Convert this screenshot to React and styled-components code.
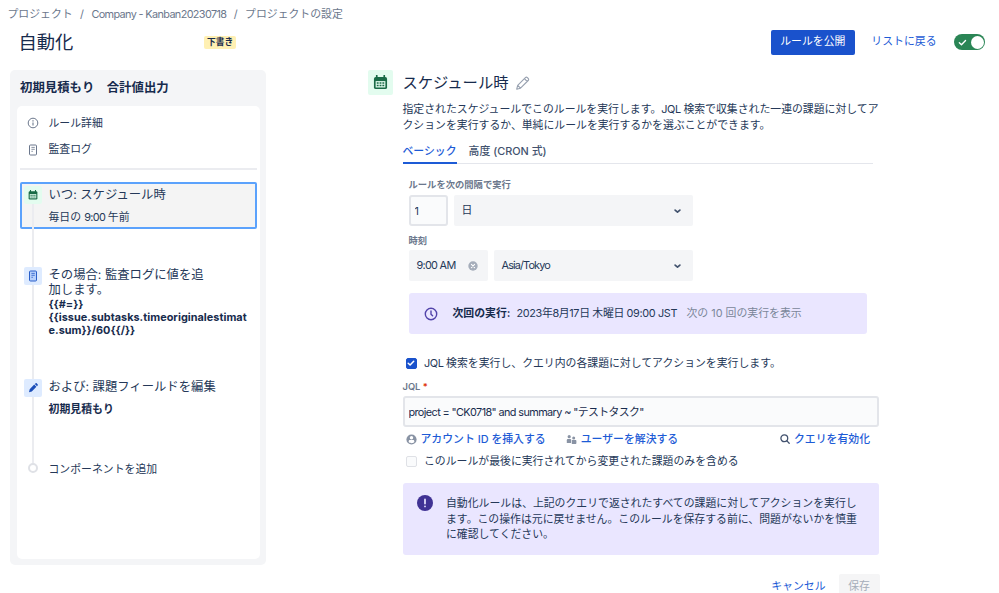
import React from 'react';
import styled, { createGlobalStyle, css } from 'styled-components';

const GlobalStyle = createGlobalStyle`
  * {
    box-sizing: border-box;
  }
  body {
    margin: 0;
    background: #fff;
    color: #253858;
    font-family: Inter, "Noto Sans CJK JP", sans-serif;
    font-size: 10.87px;
    line-height: 15.5px;
    overflow: hidden;
  }
  p, h1, h2, h3, ul {
    margin: 0;
    padding: 0;
    font-weight: 400;
  }
  button, input {
    font: inherit;
    color: inherit;
    letter-spacing: inherit;
  }
  svg {
    display: block;
    flex: none;
  }
`;

const Page = styled.div`
  width: 999px;
  height: 593px;
  overflow: hidden;
`;

const Breadcrumbs = styled.nav`
  display: flex;
  gap: 7.4px;
  height: 22px;
  padding: 7px 0 0 7.5px;
  color: #6b778c;
  white-space: nowrap;
`;

const Latin = styled.span`
  letter-spacing: ${props => props.$spacing || '-0.4px'};
`;

const Header = styled.header`
  display: flex;
  align-items: center;
  height: 40px;
  padding: 0 14px 0 18.5px;
`;

const PageTitle = styled.h1`
  width: 185.5px;
  font-size: 18.3px;
  line-height: 26px;
  color: #172b4d;
`;

const DraftBadge = styled.span`
  height: 13px;
  padding: 0 3px;
  border-radius: 2px;
  background: #fff0b3;
  color: #172b4d;
  font-size: 8.7px;
  font-weight: 700;
  line-height: 13px;
`;

const HeaderActions = styled.div`
  display: flex;
  align-items: center;
  margin-left: auto;
`;

const PublishButton = styled.button`
  width: 84px;
  height: 25px;
  margin-right: 16.5px;
  padding: 0;
  border: 0;
  border-radius: 2px;
  background: #1a52cc;
  color: #fff;
`;

const TextLink = styled.a`
  color: #1d5bd6;
  white-space: nowrap;
`;

const Toggle = styled.span`
  display: flex;
  align-items: center;
  justify-content: space-between;
  width: 31px;
  height: 16px;
  margin-left: 17.5px;
  padding: 0 1px 0 4px;
  border-radius: 8px;
  background: #2a8555;

  &::after {
    content: "";
    width: 13px;
    height: 13px;
    border-radius: 50%;
    background: #fff;
  }
`;

const Columns = styled.div`
  display: flex;
  align-items: flex-start;
  padding: 8px 0 0 10px;
`;

const Sidebar = styled.aside`
  width: 256px;
  height: 495px;
  padding: 8px 6px 6px 7px;
  border-radius: 5px;
  background: #f4f5f7;
`;

const RuleName = styled.h3`
  height: 28px;
  padding-left: 3px;
  color: #172b4d;
  font-size: 12.4px;
  font-weight: 700;
  line-height: 19px;
`;

// own stacking context, so the selection outline stays above the card
const RuleCard = styled.div`
  position: relative;
  z-index: 0;
  height: 453px;
  padding: 4px 3px 0;
  border-radius: 5px;
  background: #fff;
`;

const MenuItem = styled.div`
  display: flex;
  align-items: center;
  gap: 9.5px;
  height: 26.5px;
  padding-left: 7px;
`;

const Divider = styled.div`
  height: 2px;
  margin: 5px 0 12px;
  background: #ebecf0;
`;

const Steps = styled.ul`
  list-style: none;
`;

const Step = styled.li`
  display: flex;
  height: ${props => props.$height}px;
`;

const Rail = styled.div`
  display: flex;
  flex-direction: column;
  align-items: center;
  flex: none;
  width: 26px;

  &::after {
    content: "";
    flex: 1;
    width: 2px;
    background: ${props => (props.$last ? 'transparent' : '#ebecf0')};
  }
`;

const StepTile = styled.span`
  display: flex;
  align-items: center;
  justify-content: center;
  width: 18px;
  height: 18px;
  border-radius: 2px;
  background: ${props => props.$color};
`;

const StepText = styled.div`
  padding-left: 2.5px;
  width: 205px;
`;

// the outline covers only the text, the rail runs on below it
const SelectedStep = styled(Step)`
  position: relative;

  &::before {
    content: "";
    position: absolute;
    inset: 0 0 38px;
    border: 2px solid #5ba2fc;
    border-radius: 2px;
    background: #f4f4f4;
    z-index: -1;
  }

  ${Rail} {
    padding-top: 4px;
  }
  ${StepText} {
    padding-top: 5px;
  }
`;

const StepTitle = styled.p`
  font-size: 12.35px;
  line-height: 15.5px;
`;

const StepDetail = styled.p`
  margin-top: ${props => props.$gap || 0}px;
  line-height: 13px;
  white-space: nowrap;
  ${props => props.$strong && css`
    color: #172b4d;
    font-weight: 700;
    letter-spacing: 0.03px;
  `}
`;

const Ring = styled.span`
  width: 10px;
  height: 10px;
  border: 2px solid #dfe1e6;
  border-radius: 50%;
`;

const Main = styled.main`
  width: 512px;
  margin-left: 101.5px;
`;

const RuleHeading = styled.div`
  display: flex;
  align-items: center;
  height: 25px;
`;

const HeadingTile = styled(StepTile)`
  width: 25px;
  height: 25px;
  margin-right: 10px;
`;

const HeadingText = styled.h2`
  margin-right: 5px;
  color: #172b4d;
  font-size: 15.3px;
`;

const Body = styled.div`
  padding-left: 35px;
`;

const Description = styled.p`
  padding-top: 7px;
  white-space: nowrap;
`;

const Tabs = styled.div`
  display: flex;
  gap: 12px;
  width: 470px;
  height: 26px;
  margin-top: 5px;
  border-bottom: 1px solid #e4e6ec;
  font-weight: 500;
`;

const Tab = styled.span`
  height: 26px;
  padding-top: 6px;
  color: ${props => (props.$active ? '#1d5bd6' : '#42526e')};
  border-bottom: ${props => (props.$active ? '2px solid #1d5bd6' : '0')};
`;

const Fields = styled.div`
  padding: 13px 0 0 6px;
`;

const Label = styled.label`
  display: block;
  height: ${props => props.$height || 18}px;
  color: #6b778c;
  font-size: 9.3px;
  font-weight: 600;
  line-height: 15px;
`;

const FieldRow = styled.div`
  display: flex;
  gap: 6px;
  height: 31px;
  margin-bottom: 7px;
`;

const Control = styled.div`
  display: flex;
  align-items: center;
  justify-content: space-between;
  width: ${props => props.$width}px;
  padding: 0 10px 0 8px;
  border-radius: 2px;
  background: #f4f5f7;
  color: #253858;
  letter-spacing: ${props => props.$spacing || '-0.7px'};
`;

const NumberInput = styled.input`
  width: 39px;
  height: 31px;
  padding: 0 4px;
  border: 2px solid #e3e5ea;
  border-radius: 3px;
  background: #fafbfc;
  color: #253858;
`;

const NextRun = styled.div`
  display: flex;
  align-items: center;
  width: 458px;
  height: 41px;
  margin-top: 12px;
  padding-left: 15px;
  border-radius: 3px;
  background: #eae6ff;
  white-space: nowrap;

  strong {
    width: 64px;
    margin-left: 15px;
    color: #172b4d;
    font-weight: 700;
  }
`;

const NextRunDate = styled.span`
  width: 170px;
  letter-spacing: -0.35px;
`;

const Muted = styled.span`
  padding-top: 1px;
  color: #7a869a;
`;

const CheckRow = styled.label`
  display: flex;
  align-items: center;
  gap: 7.5px;
  height: 16px;
  margin: ${props => props.$margin || 0};
  padding-left: 3px;
  white-space: nowrap;
`;

const CheckText = styled.span`
  padding-top: 1px;
`;

const Box = styled.span`
  display: flex;
  align-items: center;
  justify-content: center;
  width: 11px;
  height: 11px;
  border: 1px solid ${props => (props.$checked ? '#1a52cc' : '#dfe1e6')};
  border-radius: 2px;
  background: ${props => (props.$checked ? '#1a52cc' : '#fafbfc')};
`;

const Required = styled.span`
  color: #de350b;
`;

const QueryInput = styled.input`
  display: block;
  width: 476.5px;
  height: 31px;
  padding: 0 4px 2px;
  border: 2px solid #e3e5ea;
  border-radius: 3px;
  background: #fafbfc;
  color: #172b4d;
  letter-spacing: -0.6px;
`;

const QueryLinks = styled.div`
  display: flex;
  align-items: center;
  height: 16px;
  margin: 4px 0 6px;
  padding: 0 9.5px 0 3px;

  svg {
    margin-right: 4px;
  }
  ${TextLink} {
    padding-top: 2px;
    font-weight: 500;
  }
`;

const ResolveGroup = styled.span`
  display: flex;
  align-items: center;
  margin: 0 auto 0 20px;
`;

const Warning = styled.div`
  display: flex;
  gap: 13.5px;
  width: 476.5px;
  height: 72px;
  margin-top: 14px;
  padding: 12px 14px;
  border-radius: 3px;
  background: #eae6ff;
  white-space: nowrap;

  p {
    padding-top: 1px;
  }
`;

const Actions = styled.div`
  display: flex;
  justify-content: flex-end;
  align-items: center;
  gap: 13px;
  height: 25px;
  width: 477px;
  margin-top: 19px;
`;

const SaveButton = styled.button`
  width: 41px;
  height: 25px;
  padding: 0;
  border: 0;
  border-radius: 2px;
  background: #f5f5f6;
  color: #a5adba;
`;

const CalendarIcon = ({ size, color = '#1a6b47' }) => (
  <svg width={size} height={size} viewBox="0 0 16 16" fill="none">
    <path d="M3 2h10a2 2 0 0 1 2 2v9a2 2 0 0 1-2 2H3a2 2 0 0 1-2-2V4a2 2 0 0 1 2-2z" fill={color} />
    <path d="M2.8 6.5h10.4v6.8H2.8z" fill="#e3fcef" />
    <path d="M4 .6v3M12 .6v3" stroke={color} strokeWidth="1.8" strokeLinecap="round" />
    <path d="M4 8.5h2M7 8.5h2M10 8.5h2M4 11.2h2M7 11.2h2M10 11.2h2" stroke={color} strokeWidth="1.6" />
  </svg>
);

const InfoIcon = () => (
  <svg width="12" height="12" viewBox="0 0 12 12" fill="none" stroke="#6b778c">
    <circle cx="6" cy="6" r="4.8" />
    <path d="M6 5.5v2.9" strokeWidth="1.1" />
    <path d="M6 3.3v1.1" strokeWidth="1.2" />
  </svg>
);

const LogIcon = ({ color, fill = 'none' }) => (
  <svg width="12" height="12" viewBox="0 0 12 12" fill="none" stroke={color}>
    <rect x="2.5" y="1" width="7" height="10" rx="1" fill={fill} />
    <path d="M4.4 3.4h3.4M4.4 5.3h3.4M4.4 7.3h1.5" strokeWidth="0.8" />
  </svg>
);

const EditIcon = () => (
  <svg width="12" height="12" viewBox="0 0 12 12" fill="#1a4db8">
    <path d="M7.2 2.6l2.2 2.2-4.6 4.7-2.8.8.7-3zM7.8 2l.7-.6c.4-.4.9-.4 1.3 0l.8.9c.4.4.4.9 0 1.3l-.6.6z" />
  </svg>
);

const PencilIcon = () => (
  <svg width="18" height="18" viewBox="0 0 18 18" fill="none" stroke="#97a0af" strokeWidth="1.1" strokeLinejoin="round">
    <path d="M3.7 11.4l7.7-7.7c.6-.6 1.4-.6 2 0l.8.8c.6.6.6 1.4 0 2l-7.7 7.7-3.8 1zM10.4 4.7l2.8 2.8M3.7 11.4l2.8 2.8" />
  </svg>
);

const Chevron = () => (
  <svg width="11" height="10" viewBox="0 0 11 10" fill="none" stroke="#42526e" strokeWidth="1.7" strokeLinecap="round" strokeLinejoin="round">
    <path d="M3.1 4.1l2.4 2.1 2.4-2.1" />
  </svg>
);

const ClearIcon = () => (
  <svg width="10" height="10" viewBox="0 0 10 10">
    <circle cx="5" cy="5" r="4.7" fill="#a5adba" />
    <path d="M3.4 3.4l3.2 3.2M6.6 3.4L3.4 6.6" stroke="#fff" strokeWidth="1.1" strokeLinecap="round" />
  </svg>
);

const ClockIcon = () => (
  <svg width="14" height="14" viewBox="0 0 14 14" fill="none" stroke="#5243aa" strokeLinecap="round" strokeLinejoin="round">
    <circle cx="7" cy="7" r="5.7" strokeWidth="1.4" />
    <path d="M7 4v3.2l1.6 1.6" strokeWidth="1.4" />
  </svg>
);

const CheckIcon = ({ width = 8, weight = 1.5 }) => (
  <svg width={width} height={width} viewBox="0 0 8 8" fill="none" stroke="#fff" strokeWidth={weight} strokeLinecap="round" strokeLinejoin="round">
    <path d="M1.2 4.2l1.9 1.8 3.6-3.8" />
  </svg>
);

const UserIcon = () => (
  <svg width="11" height="11" viewBox="0 0 11 11">
    <circle cx="5.5" cy="5.5" r="5.1" fill="#8993a4" />
    <circle cx="5.5" cy="3.8" r="1.7" fill="#fff" />
    <path d="M2.7 8V7.3c0-.7.6-1.2 1.2-1.2h3.2c.7 0 1.2.5 1.2 1.2V8c-1.4 1.6-4.2 1.6-5.6 0z" fill="#fff" />
  </svg>
);

const PeopleIcon = () => (
  <svg width="11" height="11" viewBox="0 0 11 11" fill="#8993a4">
    <circle cx="3.2" cy="2.7" r="1.6" />
    <path d="M.8 9V6.2C.8 5.4 1.4 5 2 5h2.3c.4 0 .8.2.8.6V9z" />
    <circle cx="7.7" cy="4" r="1.5" />
    <path d="M5.8 6.1h3.6c.6 0 1 .4 1 1v1.8c0 .6-.4 1-1 1H5.8z" />
  </svg>
);

const SearchIcon = () => (
  <svg width="10" height="10" viewBox="0 0 10 10" fill="none" stroke="#42526e" strokeWidth="1.3" strokeLinecap="round">
    <circle cx="4.3" cy="4.3" r="3.4" />
    <path d="M6.9 6.9l2.3 2.3" />
  </svg>
);

const AlertIcon = () => (
  <svg width="16" height="16" viewBox="0 0 16 16">
    <circle cx="8" cy="8" r="8" fill="#403294" />
    <path d="M8 4.4v4.2M8 11.3v.2" stroke="#eae6ff" strokeWidth="1.7" strokeLinecap="round" />
  </svg>
);

const RuleSidebar = () => (
  <Sidebar>
    <RuleName>初期見積もり　合計値出力</RuleName>
    <RuleCard>
      <MenuItem>
        <InfoIcon />
        ルール詳細
      </MenuItem>
      <MenuItem>
        <LogIcon color="#6b778c" />
        監査ログ
      </MenuItem>
      <Divider />
      <Steps>
        <SelectedStep $height={84.5}>
          <Rail>
            <StepTile $color="#e3fcef"><CalendarIcon size={10} /></StepTile>
          </Rail>
          <StepText>
            <StepTitle>いつ: スケジュール時</StepTitle>
            <StepDetail $gap={8}>毎日の <Latin $spacing="-0.6px">9:00 </Latin>午前</StepDetail>
          </StepText>
        </SelectedStep>
        <Step $height={112.5}>
          <Rail>
            <StepTile $color="#deebff"><LogIcon color="#2a5fc9" fill="#b7d0fb" /></StepTile>
          </Rail>
          <StepText>
            <StepTitle>その場合: 監査ログに値を追<br />加します。</StepTitle>
            <StepDetail $strong>
              {'{{#=}}'}<br />
              {'{{issue.subtasks.timeoriginalestimat'}<br />
              {'e.sum}}/60{{/}}'}
            </StepDetail>
          </StepText>
        </Step>
        <Step $height={84}>
          <Rail>
            <StepTile $color="#deebff"><EditIcon /></StepTile>
          </Rail>
          <StepText>
            <StepTitle>および: 課題フィールドを編集</StepTitle>
            <StepDetail $strong $gap={8}>初期見積もり</StepDetail>
          </StepText>
        </Step>
        <Step $height={12}>
          <Rail $last><Ring /></Rail>
          <StepText>
            <StepDetail>コンポーネントを追加</StepDetail>
          </StepText>
        </Step>
      </Steps>
    </RuleCard>
  </Sidebar>
);

const ScheduleForm = () => (
  <Main>
    <RuleHeading>
      <HeadingTile $color="#e3fcef"><CalendarIcon size={15} /></HeadingTile>
      <HeadingText>スケジュール時</HeadingText>
      <PencilIcon />
    </RuleHeading>
    <Body>
      <Description>
        指定されたスケジュールでこのルールを実行します。<Latin>JQL </Latin>検索で収集された一連の課題に対してア<br />
        クションを実行するか、単純にルールを実行するかを選ぶことができます。
      </Description>
      <Tabs>
        <Tab $active>ベーシック</Tab>
        <Tab>高度 (CRON 式)</Tab>
      </Tabs>
      <Fields>
        <Label>ルールを次の間隔で実行</Label>
        <FieldRow>
          <NumberInput defaultValue="1" />
          <Control $width={239}>日<Chevron /></Control>
        </FieldRow>
        <Label $height={17}>時刻</Label>
        <FieldRow>
          <Control $width={79}>9:00 AM<ClearIcon /></Control>
          <Control $width={199} $spacing="-0.85px">Asia/Tokyo<Chevron /></Control>
        </FieldRow>
        <NextRun>
          <ClockIcon />
          <strong>次回の実行:</strong>
          <NextRunDate>2023年8月17日 木曜日 09:00 JST</NextRunDate>
          <Muted>次の 10 回の実行を表示</Muted>
        </NextRun>
      </Fields>
      <CheckRow $margin="21px 0 8px">
        <Box $checked><CheckIcon /></Box>
        <CheckText><Latin>JQL </Latin>検索を実行し、クエリ内の各課題に対してアクションを実行します。</CheckText>
      </CheckRow>
      <Label $height={17}>JQL <Required>*</Required></Label>
      <QueryInput defaultValue={'project = "CK0718" and summary ~ "テストタスク"'} />
      <QueryLinks>
        <UserIcon />
        <TextLink>アカウント ID を挿入する</TextLink>
        <ResolveGroup>
          <PeopleIcon />
          <TextLink>ユーザーを解決する</TextLink>
        </ResolveGroup>
        <SearchIcon />
        <TextLink>クエリを有効化</TextLink>
      </QueryLinks>
      <CheckRow>
        <Box />
        <CheckText>このルールが最後に実行されてから変更された課題のみを含める</CheckText>
      </CheckRow>
      <Warning>
        <AlertIcon />
        <p>
          自動化ルールは、上記のクエリで返されたすべての課題に対してアクションを実行し<br />
          ます。この操作は元に戻せません。このルールを保存する前に、問題がないかを慎重<br />
          に確認してください。
        </p>
      </Warning>
      <Actions>
        <TextLink>キャンセル</TextLink>
        <SaveButton>保存</SaveButton>
      </Actions>
    </Body>
  </Main>
);

export default function App() {
  return (
    <Page>
      <GlobalStyle />
      <Breadcrumbs>
        <span>プロジェクト</span>
        <span>/</span>
        <Latin $spacing="-0.63px">Company - Kanban20230718</Latin>
        <span>/</span>
        <span>プロジェクトの設定</span>
      </Breadcrumbs>
      <Header>
        <PageTitle>自動化</PageTitle>
        <DraftBadge>下書き</DraftBadge>
        <HeaderActions>
          <PublishButton>ルールを公開</PublishButton>
          <TextLink>リストに戻る</TextLink>
          <Toggle><CheckIcon width={9} weight={1.2} /></Toggle>
        </HeaderActions>
      </Header>
      <Columns>
        <RuleSidebar />
        <ScheduleForm />
      </Columns>
    </Page>
  );
}
